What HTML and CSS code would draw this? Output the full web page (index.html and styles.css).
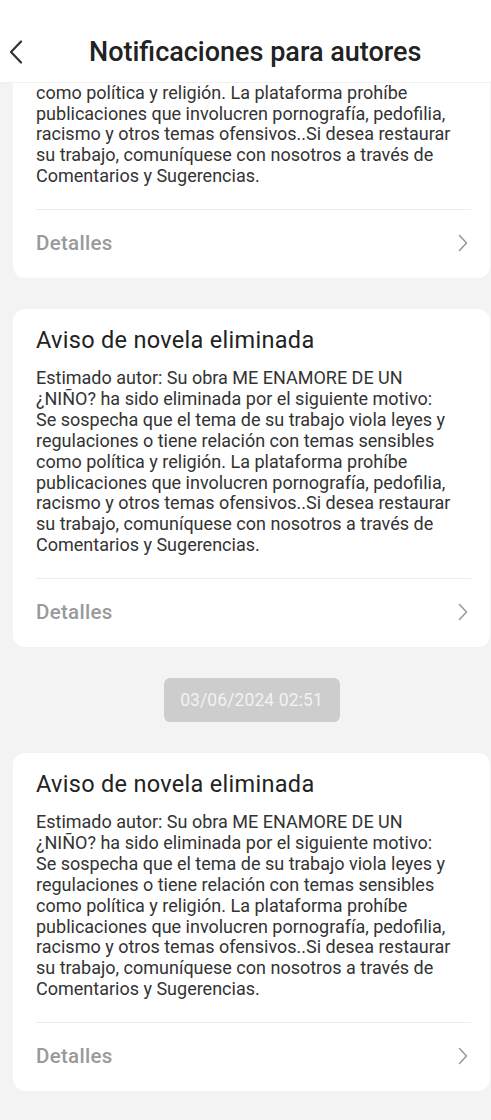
FILE: index.html
```html
<!DOCTYPE html>
<html lang="es">
<head>
<meta charset="utf-8">
<title>Notificaciones para autores</title>
<link rel="stylesheet" href="styles.css">
</head>
<body>
<div class="app">
  <header class="topbar">
    <button class="back" aria-label="Atrás">
      <svg width="14" height="24" viewBox="0 0 14 24"><path d="M12 1.5 L2 12 L12 22.5" fill="none" stroke="#333" stroke-width="2.2" stroke-linecap="round" stroke-linejoin="round"/></svg>
    </button>
    <h1 class="title">Notificaciones para autores</h1>
  </header>
  <main class="scroller">
    <div class="list">
      <article class="card">
        <h2 class="card-title">Aviso de novela eliminada</h2>
        <p class="card-body">Estimado autor: Su obra ME ENAMORE DE UN ¿NIÑO? ha sido eliminada por el siguiente motivo: Se sospecha que el tema de su trabajo viola leyes y regulaciones o tiene relación con temas sensibles como política y religión. La plataforma prohíbe publicaciones que involucren pornografía, pedofilia, racismo y otros temas ofensivos..Si desea restaurar su trabajo, comuníquese con nosotros a través de Comentarios y Sugerencias.</p>
        <div class="card-foot">
          <span class="details">Detalles</span>
          <svg class="chev" width="10" height="18" viewBox="0 0 10 18"><path d="M1.5 1.5 L8.5 9 L1.5 16.5" fill="none" stroke="#999" stroke-width="1.6" stroke-linecap="round" stroke-linejoin="round"/></svg>
        </div>
      </article>
      <article class="card">
        <h2 class="card-title">Aviso de novela eliminada</h2>
        <p class="card-body">Estimado autor: Su obra ME ENAMORE DE UN ¿NIÑO? ha sido eliminada por el siguiente motivo: Se sospecha que el tema de su trabajo viola leyes y regulaciones o tiene relación con temas sensibles como política y religión. La plataforma prohíbe publicaciones que involucren pornografía, pedofilia, racismo y otros temas ofensivos..Si desea restaurar su trabajo, comuníquese con nosotros a través de Comentarios y Sugerencias.</p>
        <div class="card-foot">
          <span class="details">Detalles</span>
          <svg class="chev" width="10" height="18" viewBox="0 0 10 18"><path d="M1.5 1.5 L8.5 9 L1.5 16.5" fill="none" stroke="#999" stroke-width="1.6" stroke-linecap="round" stroke-linejoin="round"/></svg>
        </div>
      </article>
      <div class="date-row"><span class="date">03/06/2024 02:51</span></div>
      <article class="card">
        <h2 class="card-title">Aviso de novela eliminada</h2>
        <p class="card-body">Estimado autor: Su obra ME ENAMORE DE UN ¿NIÑO? ha sido eliminada por el siguiente motivo: Se sospecha que el tema de su trabajo viola leyes y regulaciones o tiene relación con temas sensibles como política y religión. La plataforma prohíbe publicaciones que involucren pornografía, pedofilia, racismo y otros temas ofensivos..Si desea restaurar su trabajo, comuníquese con nosotros a través de Comentarios y Sugerencias.</p>
        <div class="card-foot">
          <span class="details">Detalles</span>
          <svg class="chev" width="10" height="18" viewBox="0 0 10 18"><path d="M1.5 1.5 L8.5 9 L1.5 16.5" fill="none" stroke="#999" stroke-width="1.6" stroke-linecap="round" stroke-linejoin="round"/></svg>
        </div>
      </article>
    </div>
  </main>
</div>
</body>
</html>
```
FILE: styles.css
```css
* { box-sizing: border-box; }
html, body { margin: 0; padding: 0; }
body {
  font-family: Roboto, "Noto Sans", "Liberation Sans", sans-serif;
  background: #f3f3f3;
  width: 491px;
  height: 1120px;
  overflow: hidden;
}
.app {
  display: flex;
  flex-direction: column;
  height: 1120px;
}
.topbar {
  height: 83px;
  flex: 0 0 83px;
  background: #fff;
  border-bottom: 1px solid #f0f0f0;
  display: flex;
  align-items: center;
  padding-top: 22px;
  position: relative;
  z-index: 2;
}
.back {
  border: 0;
  background: none;
  padding: 0;
  margin-left: 9px;
  width: 16px;
  height: 26px;
  display: flex;
  align-items: center;
}
.title {
  margin: 0 0 0 64px;
  font-size: 27px;
  font-weight: 500;
  color: #222;
  letter-spacing: 0;
}
.scroller {
  flex: 1;
  overflow: hidden;
}
.list {
  margin-top: -143px;
  display: flex;
  flex-direction: column;
  gap: 31px;
  padding-left: 13px;
  padding-right: 1px;
}
.card {
  background: #fff;
  border-radius: 12px;
  height: 338px;
  padding: 17px 19px 0 23px;
  display: flex;
  flex-direction: column;
}
.card-title {
  margin: 0;
  font-size: 23.5px;
  font-weight: 400;
  letter-spacing: 0.3px;
  color: #222;
  line-height: 28px;
}
.card-body {
  margin: 14px 17px 0 0;
  font-size: 18px;
  line-height: 20.9px;
  color: #333;
  height: 210px;
}
.card-foot {
  border-top: 1px solid #ececec;
  display: flex;
  align-items: center;
  justify-content: space-between;
  height: 66px;
  padding-right: 3px;
}
.details {
  font-size: 20.5px;
  font-weight: 500;
  letter-spacing: 0.3px;
  color: #9a9a9a;
}
.chev { display: block; }
.date-row {
  display: flex;
  justify-content: center;
}
.date {
  background: #cdcdcd;
  color: #f2f2f2;
  border-radius: 6px;
  width: 176px;
  height: 44px;
  display: flex;
  align-items: center;
  justify-content: center;
  font-size: 17.5px;
  letter-spacing: 0.1px;
}
```
